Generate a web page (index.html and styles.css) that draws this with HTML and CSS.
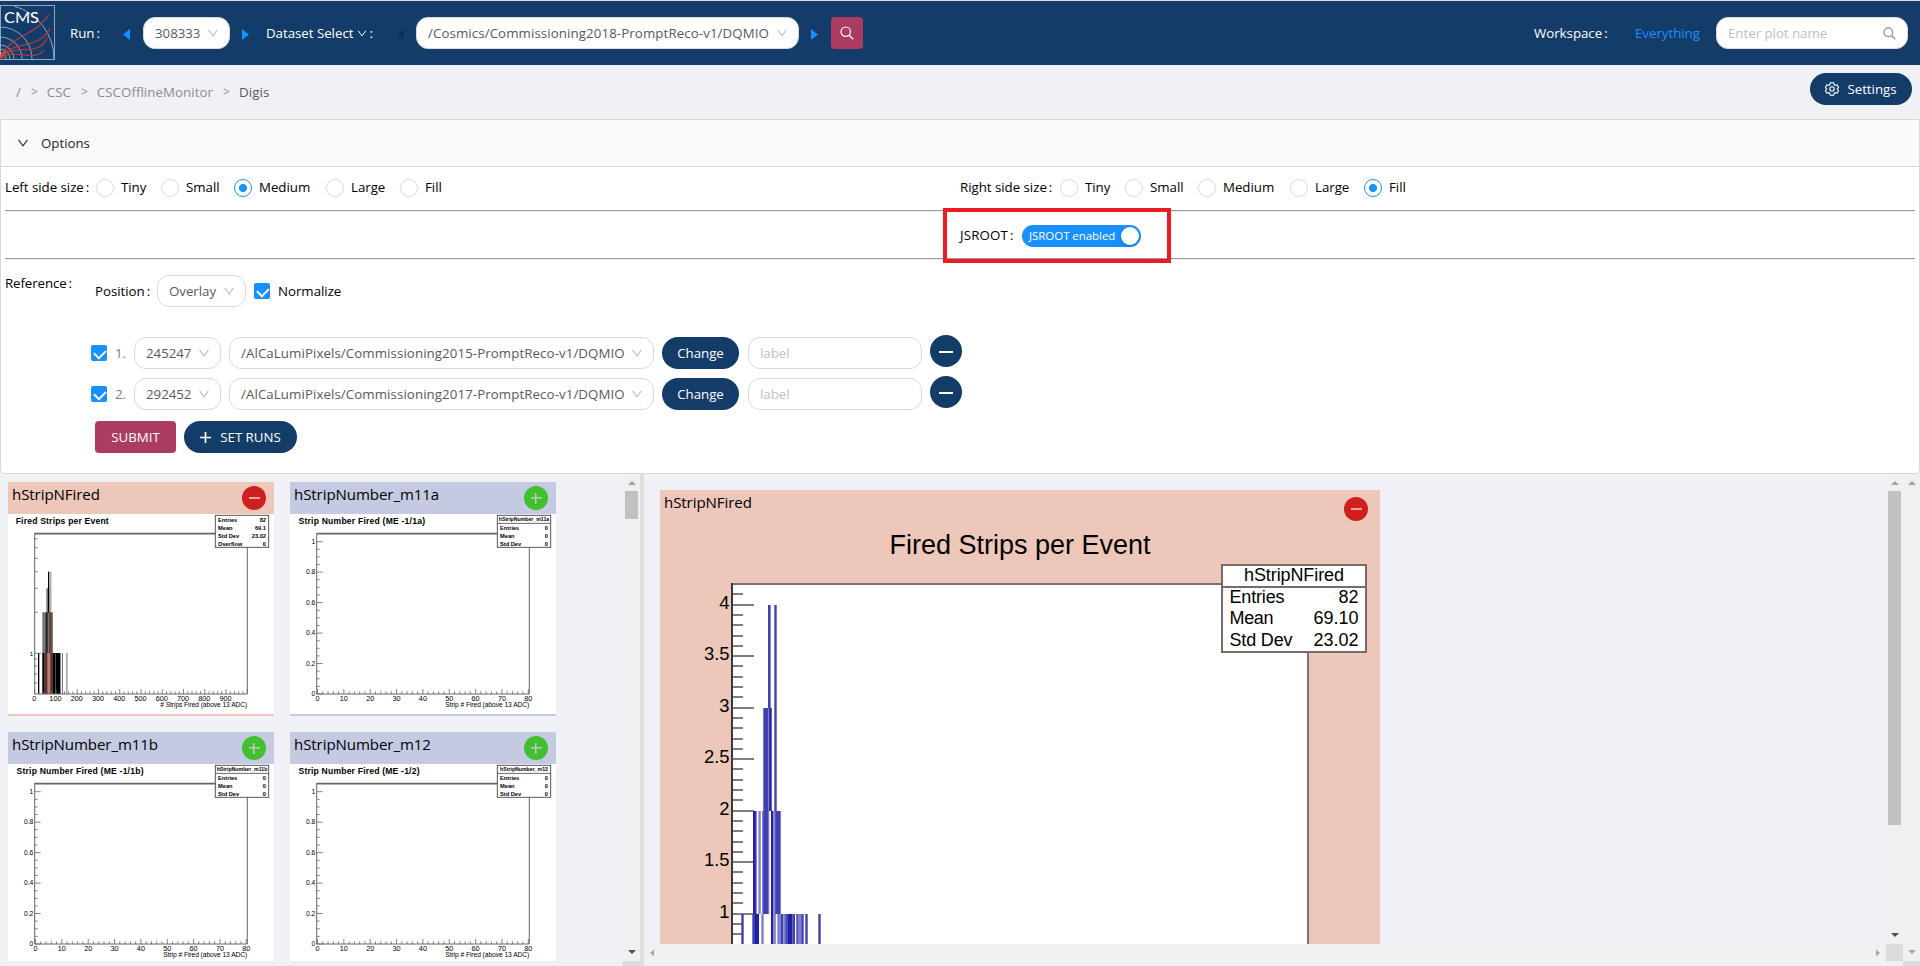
FILE: index.html
```html
<!DOCTYPE html>
<html lang="en">
<head>
<meta charset="utf-8">
<title>DQM GUI</title>
<link rel="stylesheet" href="styles.css">
</head>
<body>
<svg width="0" height="0" class="defs">
  <symbol id="chev" viewBox="0 0 10 8"><path d="M.6.8 5 6.8 9.400.8" fill="none" stroke="currentColor" stroke-width="1.100"/></symbol>
  <symbol id="search" viewBox="0 0 14 14"><circle cx="5.700" cy="5.700" r="4.700" fill="none" stroke="currentColor" stroke-width="1.200"/><path d="M9.200 9.200 13.200 13.200" stroke="currentColor" stroke-width="1.400"/></symbol>
  <symbol id="tri" viewBox="0 0 7 11"><path d="M0 0 7 5.500 0 11z" fill="currentColor"/></symbol>
  <symbol id="sb" viewBox="0 0 8 4"><path d="M0 4 4 0 8 4z" fill="currentColor"/></symbol>
</svg>

<header class="topbar">
  <svg class="logo" viewBox="0 0 55 55">
    <g fill="none" stroke="#8fa6c0" stroke-width="1">
      <rect x=".5" y=".5" width="54" height="54"/>
      <circle cx="0" cy="54" r="6"/><circle cx="0" cy="54" r="10"/><circle cx="0" cy="54" r="14"/>
      <circle cx="0" cy="54" r="22"/><circle cx="0" cy="54" r="32"/><path d="M14 1A55 55 0 0 1 54 54"/>
    </g>
    <g fill="none" stroke="#b8393c" stroke-width="1.200">
      <path d="M0 54C8 30 36 32 49 9"/><path d="M0 54C10 34 40 46 50 23"/><path d="M0 54C12 36 38 54 47 33"/><path d="M0 54C14 42 36 58 44 45"/>
    </g>
    <path d="M0 54 3 46 8 46z" fill="#d8402f"/>
    <text x="4" y="18" textLength="35" lengthAdjust="spacingAndGlyphs">CMS</text>
  </svg>
  <span class="run">Run<i>:</i></span>
  <svg class="tri left"><use href="#tri"/></svg>
  <div class="select w-run">308333<svg><use href="#chev"/></svg></div>
  <svg class="tri"><use href="#tri"/></svg>
  <span class="dataset">Dataset Select <svg><use href="#chev"/></svg><i>:</i></span>
  <svg class="tri left off"><use href="#tri"/></svg>
  <div class="select w-top">/Cosmics/Commissioning2018-PromptReco-v1/DQMIO<svg><use href="#chev"/></svg></div>
  <svg class="tri next"><use href="#tri"/></svg>
  <button class="btn square"><svg><use href="#search"/></svg></button>
  <span class="workspace">Workspace<i>:</i></span>
  <a class="everything">Everything</a>
  <div class="select search">Enter plot name<svg><use href="#search"/></svg></div>
</header>

<nav class="crumbs">
  <div class="trail"><span>/</span><b>&gt;</b><span>CSC</span><b>&gt;</b><span class="mon">CSCOfflineMonitor</span><b>&gt;</b><span class="here">Digis</span></div>
  <button class="btn pill settings"><svg viewBox="0 0 14 14" fill="none" stroke="currentColor" stroke-width="1.100"><path d="M5.400.8h3.200l.5 1.800 1.200.7 1.800-.5 1.500 2.600L12.300 7l1.300 1.600-1.500 2.600-1.800-.5-1.200.7-.5 1.800H5.400l-.5-1.800-1.200-.7-1.800.5L.4 8.600 1.700 7 .4 5.400l1.500-2.600 1.800.5 1.200-.7z"/><circle cx="7" cy="7" r="2.200"/></svg>Settings</button>
</nav>

<section class="panel">
  <div class="panel-head"><svg><use href="#chev"/></svg>Options</div>
  <div class="panel-body">
    <div class="sizes">
      <span class="lab">Left side size<i>:</i></span>
      <div class="radios"><label>Tiny</label><label>Small</label><label class="on">Medium</label><label>Large</label><label>Fill</label></div>
      <span class="lab">Right side size<i>:</i></span>
      <div class="radios"><label>Tiny</label><label>Small</label><label>Medium</label><label>Large</label><label class="on">Fill</label></div>
    </div>
    <div class="jsroot">
      <span>JSROOT<i>:</i></span><div class="switch">JSROOT enabled</div>
      <div class="highlight"></div>
    </div>
    <div class="reference">
      <span class="ref-lab">Reference<i>:</i></span>
      <div class="ref-main">
        <div class="position"><span>Position<i>:</i></span><div class="select w-pos">Overlay<svg><use href="#chev"/></svg></div><em class="check"></em><span>Normalize</span></div>
        <div class="ref-row"><em class="check"></em><span class="num">1.</span><div class="select w-run">245247<svg><use href="#chev"/></svg></div><div class="select w-ref">/AlCaLumiPixels/Commissioning2015-PromptReco-v1/DQMIO<svg><use href="#chev"/></svg></div><button class="btn pill change">Change</button><div class="select label">label</div><button class="btn round"></button></div>
        <div class="ref-row"><em class="check"></em><span class="num">2.</span><div class="select w-run">292452<svg><use href="#chev"/></svg></div><div class="select w-ref">/AlCaLumiPixels/Commissioning2017-PromptReco-v1/DQMIO<svg><use href="#chev"/></svg></div><button class="btn pill change">Change</button><div class="select label">label</div><button class="btn round"></button></div>
        <div class="actions"><button class="btn submit">SUBMIT</button><button class="btn pill runs"><svg viewBox="0 0 12 12"><path d="M6 0v12M0 6h12" stroke="#fff" stroke-width="1.900"/></svg>SET RUNS</button></div>
      </div>
    </div>
  </div>
</section>

<main class="split">
  <div class="pane-left">
    <div class="cards">
      <article class="card sel"><h3>hStripNFired<em class="dot minus"></em></h3><svg class="thumb" data-kind="log" data-title="Fired Strips per Event" data-len="93"></svg></article>
      <article class="card"><h3>hStripNumber_m11a<em class="dot"></em></h3><svg class="thumb" data-name="hStripNumber_m11a" data-title="Strip Number Fired (ME -1/1a)" data-len="126.500"></svg></article>
      <article class="card"><h3>hStripNumber_m11b<em class="dot"></em></h3><svg class="thumb" data-name="hStripNumber_m11b" data-title="Strip Number Fired (ME -1/1b)" data-len="127"></svg></article>
      <article class="card"><h3>hStripNumber_m12<em class="dot"></em></h3><svg class="thumb" data-name="hStripNumber_m12" data-title="Strip Number Fired (ME -1/2)" data-len="121"></svg></article>
    </div>
    <div class="vbar"><svg class="up"><use href="#sb"/></svg><div class="grip short"></div><svg class="down dark"><use href="#sb"/></svg></div>
    <div class="hstrip"></div><div class="corner"></div>
  </div>
  <div class="divider"></div>
  <div class="pane-right">
    <div class="view"><article class="big"><h3>hStripNFired<em class="dot minus"></em></h3><svg id="plot" width="720" height="454"></svg></article></div>
    <div class="vbar"><svg class="up"><use href="#sb"/></svg><div class="grip long"></div><svg class="down dark"><use href="#sb"/></svg></div>
    <div class="hbar"><svg class="lt"><use href="#tri"/></svg><svg class="rt"><use href="#tri"/></svg></div>
    <div class="corner tall"></div>
  </div>
  <div class="outer"><div class="vbar"><svg class="up"><use href="#sb"/></svg><svg class="down"><use href="#sb"/></svg></div><div class="corner"></div></div>
</main>
<script src="charts.js"></script>
</body>
</html>
```

FILE: styles.css
```css
* { box-sizing: border-box; }
body { margin: 0; width: 1920px; height: 966px; overflow: hidden; background: #f0f1f6; color: #000; font: 13.3px/22px "Open Sans", "Noto Sans", sans-serif; letter-spacing: -0.03px; display: flex; flex-direction: column; }
i { font-style: normal; margin-left: 2px; }
em { display: block; flex: none; }
svg { display: block; flex: none; }
span, a, label { white-space: nowrap; }
.defs { position: absolute; }

.topbar { height: 65px; flex: none; border-top: 1px solid #d5dadd; background: #143c69; color: #fff; display: grid; align-items: center; grid-template-columns: 69px 54px 20px 99px 24px 131px 19px 395px 20px 703px 101px 81px 192px; }
.topbar > .logo { width: 55px; height: 55px; margin-top: -1px; }
.logo text { font: 15px Lato, sans-serif; fill: #fff; letter-spacing: 0; }
.run { padding-left: 1px; }
.dataset { display: flex; align-items: center; }
.dataset svg { width: 10px; height: 7px; margin-left: 4px; }
.tri { width: 7px; height: 11px; color: #1890ff; margin-top: 3px; }
.left { transform: scaleX(-1); }
.off { color: #12304f; }
.everything { color: #1890ff; }

.select { height: 32px; border: 1px solid #d9d9d9; border-radius: 12px; background: #fff; color: #595959; display: flex; align-items: center; justify-content: space-between; padding: 0 11px; white-space: nowrap; }
.select svg { width: 10px; height: 8px; color: #bfbfbf; }
.w-run { width: 87px; }
.w-top { width: 383px; letter-spacing: .09px; }
.w-ref { width: 425px; letter-spacing: .08px; }
.w-pos { width: 89px; }
.search { width: 192px; color: #bfbfbf; }
.search svg { width: 13px; height: 13px; color: #8c8c8c; }
.label { width: 174px; color: #bfbfbf; }

.btn { border: 0; height: 32px; border-radius: 4px; background: #ab3b61; color: #fff; font: inherit; letter-spacing: inherit; display: flex; align-items: center; justify-content: center; padding: 0; white-space: nowrap; }
.pill { border-radius: 16px; background: #143c69; }
.square { width: 32px; }
.square svg { width: 14px; height: 14px; }

.crumbs { height: 54px; flex: none; display: flex; justify-content: space-between; padding: 8px 8px 0 16px; color: #8c8c8c; }
.trail { display: flex; padding-top: 8px; }
.trail b { font-weight: 400; width: 9px; margin: 0 8px 0 9px; text-align: center; font-size: 12px; }
.mon { letter-spacing: .05px; }
.trail .here { color: #595959; letter-spacing: .1px; }
.settings { width: 102px; gap: 8px; }
.settings svg { width: 14px; height: 14px; }

.panel { height: 355px; flex: none; border: 1px solid #d9d9d9; border-radius: 0 0 4px 4px; background: #fff; }
.panel-head { height: 47px; background: #fafafa; border-bottom: 1px solid #d9d9d9; display: flex; align-items: center; gap: 13px; padding: 0 0 0 17px; color: #262626; }
.panel-head svg { width: 10px; height: 8px; }
.panel-body { padding: 0 4px; }
.sizes { height: 45px; border-bottom: 1px solid #eee; box-shadow: inset 0 -1px #9a9a9a; display: grid; grid-template-columns: 91px 864px 100px auto; align-items: center; }
.sizes > * { margin-top: -4px; }
.radios { display: grid; grid-template-columns: 65px 73px 92px 74px 60px; }
.radios label { display: flex; align-items: center; gap: 7px; }
.radios label::before { content: ""; width: 16px; height: 16px; border: 1px solid #d9d9d9; border-radius: 50%; margin-top: 2px; }
.radios .on::before { border-color: #1890ff; background: radial-gradient(circle, #1890ff 3.700px, transparent 4.300px); }
.jsroot { position: relative; height: 48px; border-bottom: 1px solid #eee; box-shadow: inset 0 -1px #9a9a9a; display: grid; grid-template-columns: 62px 119px; align-items: center; padding-left: 955px; }
.jsroot > span { margin-top: -2px; letter-spacing: .15px; }
.switch { height: 22px; border-radius: 11px; background: #1890ff; color: #fff; font-size: 11.500px; letter-spacing: -.05px; line-height: 23px; padding-left: 7px; white-space: nowrap; display: flex; justify-content: space-between; align-items: center; padding-right: 2px; }
.switch::after { content: ""; width: 18px; height: 18px; border-radius: 50%; background: #fff; box-shadow: 0 2px 4px rgba(0,35,11,.2); }
.highlight { position: absolute; left: 938px; top: -4px; width: 228px; height: 55px; border: 4px solid #ed1c24; }
.reference { display: flex; padding-top: 15px; }
.ref-lab { width: 86px; margin-top: -3px; letter-spacing: -.1px; }
.position { display: flex; align-items: center; padding-left: 4px; height: 32px; margin-bottom: 30px; }
.position span:first-child { width: 62px; }
.position .check { margin: 0 8px; }
.check { width: 16px; height: 16px; border-radius: 2px; background: #1890ff; position: relative; }
.check::after { content: ""; position: absolute; left: 5px; top: 3px; width: 5.700px; height: 9px; border: solid #fff; border-width: 0 2px 2px 0; transform: rotate(45deg) translate(-.5px, -.5px); }
.ref-row { display: flex; align-items: center; height: 32px; margin-bottom: 9px; }
.ref-row .num { width: 27px; padding-left: 8px; color: #7a7a7a; }
.w-ref { margin: 0 8px; }
.change { width: 77px; margin-right: 9px; }
.round { width: 32px; border-radius: 50%; background: #143c69; margin: -4px 0 0 8px; }
.round::after { content: ""; width: 14px; height: 2px; background: #fff; margin-top: 2px; }
.actions { display: flex; gap: 8px; padding: 2px 0 0 4px; }
.submit { width: 81px; }
.runs { width: 113px; gap: 9px; }
.runs svg { width: 11px; height: 11px; }

.split { display: flex; height: 492px; flex: none; }
.pane-left { width: 640px; display: grid; grid-template: 487px 5px / 623px 17px; }
.cards { overflow: hidden; display: grid; grid-template-columns: 266px 266px; gap: 16px; padding: 8px; align-content: start; }
.card { height: 234px; background: #c5cae3; }
.sel { background: #edc7b9; }
h3 { margin: 0; font-weight: 400; font-size: 15.100px; letter-spacing: -.1px; line-height: 24px; position: relative; white-space: nowrap; }
.card h3 { height: 32px; padding: 0 8px 0 4px; }
.dot { position: absolute; right: 8px; top: 4px; width: 24px; height: 24px; border-radius: 50%; background: linear-gradient(#c0cabf, #c0cabf) center / 11px 1.500px no-repeat, linear-gradient(#c0cabf, #c0cabf) center / 1.500px 11px no-repeat, #42c02e; }
.minus { background: linear-gradient(#e6a49b, #e6a49b) center / 11px 2px no-repeat, #cf1f1f; }
.thumb { width: 266px; height: 200px; background: #fff; }
.thumb text { font-family: "Liberation Sans", Arial, sans-serif; letter-spacing: 0; }
.divider { width: 4px; background: #dedede; }
.vbar { background: #f0f0f0; display: flex; flex-direction: column; align-items: center; padding: 7px 0; color: #a3a3a3; }
.vbar svg { width: 8px; height: 4px; }
.down { transform: scaleY(-1); margin-top: auto; }
.dark { color: #505050; }
.grip { width: 13px; background: #c1c1c1; margin-top: 6px; }
.short { height: 28px; }
.long { height: 334px; }
.hstrip, .hbar { background: #f0f0f0; }
.corner { background: #dcdcdc; }
.pane-right { width: 1259px; display: grid; grid-template: 470px 22px / 1242px 17px; }
.view { overflow: hidden; padding: 16px; }
.big { width: 720px; height: 454px; background: #edc7b9; }
.big h3 { height: 0; padding-left: 4px; }
.big .dot { right: 12px; top: 7px; z-index: 1; }
#plot text { font-family: "Liberation Sans", Arial, sans-serif; letter-spacing: 0; }
.hbar { display: flex; justify-content: space-between; padding: 5px 6px; color: #a3a3a3; }
.hbar svg { width: 4px; height: 8px; }
.hbar .lt { transform: scaleX(-1); }
.tall { height: 17px; }
.outer { width: 17px; display: grid; grid-template-rows: 487px 5px; }
```

FILE: charts.js
```js
const NS = "http://www.w3.org/2000/svg";
function add(svg, tag, attrs, text) {
  const el = document.createElementNS(NS, tag);
  for (const k in attrs) el.setAttribute(k, attrs[k]);
  if (text !== undefined) el.textContent = text;
  svg.appendChild(el);
}
function line(svg, x1, y1, x2, y2, w, c) {
  add(svg, "path", { d: `M${x1} ${y1}L${x2} ${y2}`, stroke: c, "stroke-width": w });
}
function bars(svg, list) {
  for (const [x, y, w, h, fill] of list) add(svg, "rect", { x, y, width: w, height: h, fill });
}
function text(svg, x, y, size, s, extra) {
  add(svg, "text", Object.assign({ x, y, "font-size": size }, extra), s);
}

function thumb(svg) {
  const log = svg.dataset.kind === "log", L = 26.7, R = 239.3, B = 180, g = "#666";
  if (log) bars(svg, [
    [30, 139, 1.3, 41, "#000"], [34.3, 98.3, 2.8, 41, "#777"], [34.3, 139, 2.4, 41, "#000"],
    [37, 98.3, 1.8, 41, "#555"], [38.3, 74.3, 3, 65, "#777"], [38.3, 98.3, 1.2, 41, "#000"],
    [36.6, 139, 8, 41, "#5a332e"], [39.3, 139, 3, 41, "#c07e70"], [41, 98.3, 3.6, 41, "#67423c"],
    [40, 57.7, 1.3, 41, "#000"], [42.3, 57.7, 1, 41, "#888"], [43.6, 98.3, 1.3, 41, "#777"],
    [44.5, 139, 8, 41, "#000"], [47, 139, .5, 41, "#999"], [54, 139, 1, 41, "#777"], [58.3, 139, 1.2, 41, "#888"]
  ]);
  line(svg, L, 19.7, R, 19.7, 1.8, g);
  line(svg, L, 19.2, L, B, 1, g);
  line(svg, R, 19.2, R, B, 1, g);
  line(svg, L, B, R, B, 1, g);
  text(svg, log ? 7.7 : 8.5, 10.2, 8.6, svg.dataset.title, { "font-weight": "bold", textLength: svg.dataset.len });
  if (log) {
    for (const y of [98.3, 74.3, 57.7, 44.3, 33.7, 24.7, 145, 152, 160, 169]) line(svg, L, y, L + 3, y, .8, g);
    line(svg, L, 139.3, L + 6, 139.3, .8, g);
    text(svg, 25, 141.8, 6, "1", { "text-anchor": "end" });
    for (let i = 0; i <= 50; i++) {
      const x = L + i * 4.252;
      line(svg, x, B, x, B - (i % 5 ? 2.7 : 5), .8, g);
      if (i % 5 === 0 && i < 50) text(svg, x - .5, 186.8, 7.3, i * 20, { "text-anchor": "middle" });
    }
  } else {
    for (let i = 0; i <= 20; i++) {
      const y = B - i * 7.615;
      line(svg, L, y, L + (i % 4 ? 3 : 6), y, .8, g);
      if (i % 4 === 0) text(svg, 25.3, y + 2.2, 6.7, i / 20, { "text-anchor": "end" });
    }
    for (let i = 0; i <= 40; i++) {
      const x = L + .8 + i * 5.27;
      line(svg, x, B, x, B - (i % 5 ? 2.7 : 5), .8, g);
      if (i % 5 === 0) text(svg, x, 186.8, 7.3, i * 2, { "text-anchor": "middle" });
    }
  }
  text(svg, R, 193, 6.7, log ? "# Strips Fired (above 13 ADC)" : "Strip # Fired (above 13 ADC)", { "text-anchor": "end", textLength: log ? 87 : 84 });
  add(svg, "rect", { x: 207.3, y: 1.3, width: 53.4, height: 32, fill: "#fff", stroke: "#444", "stroke-width": .9 });
  const rows = log ? [["Entries", "82"], ["Mean", "69.1"], ["Std Dev", "23.02"], ["Overflow", "0"]]
                   : [null, ["Entries", "0"], ["Mean", "0"], ["Std Dev", "0"]];
  rows.forEach((r, i) => {
    const y = 7.8 + i * 8, b = { "font-weight": "bold" };
    if (!r) {
      text(svg, 234, 6.9, 5.2, svg.dataset.name, { "font-weight": "bold", "text-anchor": "middle" });
      line(svg, 207.3, 9.4, 260.7, 9.4, .8, "#444");
    } else {
      text(svg, 210, y, 5.7, r[0], b);
      text(svg, 258, y, 5.7, r[1], { "font-weight": "bold", "text-anchor": "end" });
    }
  });
}
document.querySelectorAll(".thumb").forEach(thumb);

function bigPlot(svg) {
  const g = "#7f7f7f", lt = "#7f7fcc", md = "#4040b3", dk = "#2020a6";
  add(svg, "rect", { x: 72, y: 94, width: 576, height: 400, fill: "#fff" });
  for (let i = 0; i <= 34; i++) {
    const y = Math.round(94 + i * 10.3), major = i % 5 === 2;
    line(svg, 72, y, major ? 94 : 83, y, 2, g);
    if (major) text(svg, 69.5, y + 4.3, 18.4, +(4.2 - i / 10).toFixed(1), { "text-anchor": "end" });
  }
  bars(svg, [
    [81.3, 424, 2.4, 40, md], [93, 321, 2, 143, dk], [95, 321, 1.2, 143, md], [96, 321, 1, 103, lt],
    [92.3, 424, 2.4, 40, md], [95, 424, 4, 40, dk], [98.4, 321, 2.4, 103, lt], [101.3, 424, 2.4, 40, lt],
    [102, 321, 2, 103, lt], [103.3, 218, 5.4, 206, md], [108, 115, 2.6, 103, md], [109, 218, 2.7, 103, dk],
    [108.5, 218, .8, 206, lt], [111, 321, 2.2, 143, dk], [113.2, 321, 2.6, 143, lt], [114.3, 115, 2.4, 206, md],
    [115.3, 321, 5.4, 103, md], [117.3, 424, 3.4, 40, lt], [120.7, 424, 2.6, 40, md], [123.3, 424, 2, 40, lt],
    [125.3, 424, 2, 40, md], [127.3, 424, 5, 40, dk], [132.3, 424, 2.7, 40, md], [136.3, 424, 1.6, 40, md],
    [137.9, 424, 3.6, 40, lt], [141.3, 424, 2.4, 40, md], [145.3, 424, 2.4, 40, md], [158.3, 424, 2.4, 40, md]
  ]);
  line(svg, 71, 94, 648, 94, 2, "#7b7371");
  line(svg, 648, 94, 648, 454, 2, "#7b7371");
  line(svg, 72, 93, 72, 454, 2, "#3d3835");
  text(svg, 229.5, 64, 27, "Fired Strips per Event", { textLength: 261, lengthAdjust: "spacingAndGlyphs" });
  add(svg, "rect", { x: 562, y: 75, width: 144, height: 87, fill: "#fff", stroke: "#756b68", "stroke-width": 2 });
  line(svg, 562, 97, 706, 97, 2, "#756b68");
  text(svg, 634, 90.5, 18, "hStripNFired", { "text-anchor": "middle", textLength: 100 });
  [["Entries", "82", 55], ["Mean", "69.10", 44], ["Std Dev", "23.02", 63]].forEach(([k, v, w], i) => {
    const y = 113 + i * 21.4;
    text(svg, 569.5, y, 18, k, { textLength: w });
    text(svg, 698.5, y, 18, v, { "text-anchor": "end" });
  });
}
bigPlot(document.getElementById("plot"));
```
